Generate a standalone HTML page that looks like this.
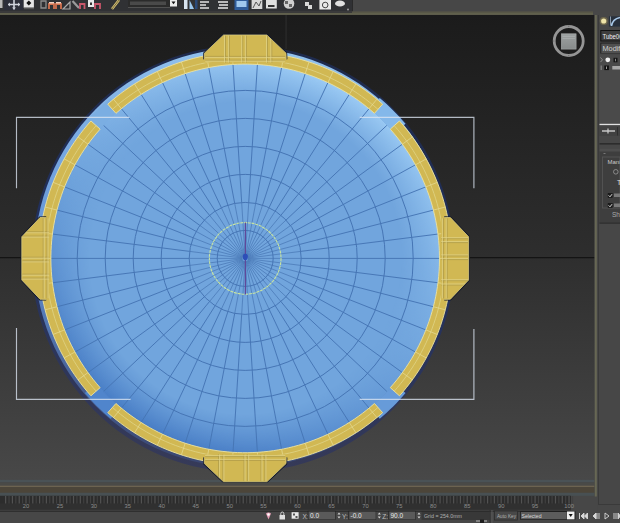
<!DOCTYPE html>
<html><head><meta charset="utf-8">
<style>
html,body{margin:0;padding:0;}
body{width:620px;height:523px;overflow:hidden;background:#474747;position:relative;font-family:"Liberation Sans",sans-serif;}
svg{position:absolute;left:0;top:0;}
</style></head>
<body>
<svg width="620" height="523" viewBox="0 0 620 523">
<defs>
  <linearGradient id="vpg" x1="0" y1="0" x2="0" y2="1">
    <stop offset="0" stop-color="#1b1b1b"/>
    <stop offset="0.5" stop-color="#2d2d2d"/>
    <stop offset="1" stop-color="#484848"/>
  </linearGradient>
  <linearGradient id="rimg" x1="0.45" y1="1" x2="0.55" y2="0">
    <stop offset="0" stop-color="#3a4670"/>
    <stop offset="0.45" stop-color="#5f8fd4"/>
    <stop offset="1" stop-color="#92c2ee"/>
  </linearGradient>
  <linearGradient id="outg" x1="0.45" y1="1" x2="0.55" y2="0">
    <stop offset="0" stop-color="#363a58"/>
    <stop offset="0.5" stop-color="#22305c"/>
    <stop offset="1" stop-color="#1e2a4c"/>
  </linearGradient>
  <linearGradient id="shadeg" x1="0.25" y1="0.95" x2="0.75" y2="0.05">
    <stop offset="0" stop-color="#467bc4"/>
    <stop offset="0.5" stop-color="#71a5dd"/>
    <stop offset="1" stop-color="#9ccbf4"/>
  </linearGradient>
  <radialGradient id="edgeg" cx="0.5" cy="0.5" r="0.5">
    <stop offset="0.8" stop-color="#000"/>
    <stop offset="1" stop-color="#fff"/>
  </radialGradient>
  <mask id="edgem"><circle cx="245.2" cy="258.4" r="194.8" fill="url(#edgeg)"/></mask>
  <linearGradient id="vcg" x1="0" y1="0" x2="0" y2="1">
    <stop offset="0" stop-color="#9ea2a2"/>
    <stop offset="1" stop-color="#878b8b"/>
  </linearGradient>
</defs>
<!-- toolbar -->
<rect x="0" y="0" width="620" height="15" fill="#474747"/>
<rect x="0" y="0" width="352.3" height="11.5" fill="#303134"/>
<rect x="352" y="0" width="1" height="11.5" fill="#2a2a2a"/>
<g>
  <rect x="0" y="0" width="2.5" height="8" fill="#b8b8b8"/>
  <rect x="4" y="0" width="19" height="10" fill="#2c2e3a"/>
  <path d="M8 4.5H20M14 0V9.5" stroke="#cfd2dc" stroke-width="1.6"/>
  <path d="M8 4.5l2-2v4zM20 4.5l-2-2v4zM14 9.5l-2-2h4z" fill="#cfd2dc"/>
  <rect x="23.7" y="0" width="10.2" height="7.7" fill="#e6e6e6"/>
  <path d="M28.8 0.5l2.5 2.5-2.5 2.5-2.5-2.5z" fill="#111"/>
  <rect x="24" y="7.7" width="10" height="1.5" fill="#555"/>
  <path d="M41 1h5v7h-5z" fill="none" stroke="#8c8c8c" stroke-width="1.3"/>
  <path d="M49 9V4h5v5M56 9V4h5v5" fill="none" stroke="#d2714e" stroke-width="1.8"/>
  <rect x="49" y="2" width="5" height="1.5" fill="#f0d0c0"/><rect x="56" y="2" width="5" height="1.5" fill="#f0d0c0"/>
  <path d="M63 9L70 2V9z" fill="none" stroke="#a8a8a8" stroke-width="1.2"/>
  <path d="M72.5 1L79 8" stroke="#9a9a9a" stroke-width="2.2"/>
  <path d="M80 9V4h4.5v5M95 9V4h5v5" fill="none" stroke="#c9566a" stroke-width="1.8"/>
  <rect x="88" y="0" width="6" height="7" fill="#e8e8e8"/><rect x="90" y="2.5" width="2" height="2.5" fill="#333"/>
  <path d="M112 9L119 0" stroke="#d8c070" stroke-width="2.5"/>
  <path d="M112 9L119 0" stroke="#4a4a30" stroke-width="0.7"/>
  <rect x="128" y="0" width="42" height="7.5" fill="#2b2b2b"/>
  <rect x="128" y="7.2" width="42" height="0.8" fill="#5a5a5a"/>
  <rect x="130" y="1.5" width="36" height="3.5" fill="#4a4a4a"/>
  <rect x="170" y="0" width="7" height="6.5" fill="#ececec"/>
  <path d="M171.5 1.5h4l-2 2.8z" fill="#111"/>
  <rect x="184" y="0" width="3.5" height="9" fill="#d8e4f0"/>
  <path d="M189.5 9V0l4.5 9z" fill="#9cc8ee"/>
  <rect x="195" y="0" width="2.5" height="9" fill="#2a4a7a"/>
  <path d="M200 2h9M200 5h6M200 8h9" stroke="#e0e0e0" stroke-width="1.6"/>
  <path d="M218 2h10M219 5h9M218 8h10" stroke="#e8e8e8" stroke-width="1.6"/>
  <rect x="234.5" y="0" width="14" height="10" fill="#2f5c9a"/>
  <rect x="236.5" y="1" width="10" height="6" fill="#9fc8ee"/>
  <rect x="251.6" y="0" width="10.7" height="9" fill="#d8d8d8"/>
  <path d="M253 8L256 2L259 6L261 1" stroke="#555" stroke-width="1" fill="none"/>
  <rect x="266" y="0" width="10.8" height="8.5" fill="#e0e0e0"/>
  <rect x="268" y="5" width="6.5" height="2" fill="#333"/>
  <circle cx="289" cy="3.5" r="5.3" fill="#cfcfcf"/>
  <path d="M285 1h3v3h-3zM289 4h3v3h-3z" fill="#666"/>
  <path d="M305 2h4v3h3v4h-4v-3h-3z" fill="#d8d8d8"/>
  <rect x="319.4" y="0" width="11.6" height="9.5" fill="#e8e8e8"/>
  <circle cx="325.2" cy="5" r="2.8" fill="none" stroke="#444" stroke-width="1"/>
  <ellipse cx="340" cy="3.5" rx="5" ry="3" fill="#e0e0e0"/>
  <circle cx="348" cy="9.5" r="0.9" fill="#aaa"/>
</g>
<rect x="352" y="11.5" width="241" height="1.3" fill="#5c5b48"/>
<rect x="0" y="11.5" width="352" height="1.5" fill="#3a3a3a"/>
<rect x="0" y="13.2" width="593" height="1.5" fill="#67664e"/>
<!-- viewport -->
<rect x="0" y="15" width="594.5" height="464.6" fill="url(#vpg)"/>
<rect x="285.5" y="15" width="1.2" height="34" fill="#2c2c2c"/>
<!-- world axis -->
<rect x="0" y="257.2" width="594.5" height="1" fill="#0e0e0e"/>
<!-- bottom bands -->
<rect x="0" y="479.8" width="594.5" height="2.6" fill="#4a5256"/>
<rect x="0" y="482.6" width="594.5" height="2.8" fill="#4a4a47"/>
<rect x="0" y="485.6" width="594.5" height="1.4" fill="#6c6350"/>
<rect x="0" y="487.2" width="594.5" height="5.6" fill="#4c4539"/>
<rect x="0" y="492.8" width="594.5" height="3" fill="#485053"/>
<clipPath id="vpclip"><rect x="0" y="15" width="594.5" height="467.6"/></clipPath>
<g clip-path="url(#vpclip)">
<ellipse cx="243.00" cy="258.80" rx="211.4" ry="213.4" fill="url(#outg)"/>
<ellipse cx="242.70" cy="257.60" rx="208.3" ry="209.6" fill="url(#rimg)"/>
<circle cx="245.20" cy="258.40" r="194.8" fill="#71a5dd"/>
<circle cx="245.20" cy="258.40" r="194.8" fill="url(#shadeg)" mask="url(#edgem)"/>
<path d="M301.20 258.40L439.50 258.40M300.76 265.42L437.97 282.75M299.44 272.33L433.40 306.72M297.27 279.01L425.86 329.93M294.27 285.38L415.47 352.00M290.50 291.32L402.39 372.61M286.02 296.73L386.84 391.41M280.90 301.55L369.05 408.11M275.21 305.68L349.31 422.45M269.04 309.07L327.93 434.21M262.50 311.66L305.24 443.19M255.69 313.41L281.61 449.26M248.72 314.29L257.40 452.32M241.68 314.29L233.00 452.32M234.71 313.41L208.79 449.26M227.90 311.66L185.16 443.19M221.36 309.07L162.47 434.21M215.19 305.68L141.09 422.45M209.50 301.55L121.35 408.11M204.38 296.73L103.56 391.41M199.90 291.32L88.01 372.61M196.13 285.38L74.93 352.00M193.13 279.01L64.54 329.93M190.96 272.33L57.00 306.72M189.64 265.42L52.43 282.75M189.20 258.40L50.90 258.40M189.64 251.38L52.43 234.05M190.96 244.47L57.00 210.08M193.13 237.79L64.54 186.87M196.13 231.42L74.93 164.80M199.90 225.48L88.01 144.19M204.38 220.07L103.56 125.39M209.50 215.25L121.35 108.69M215.19 211.12L141.09 94.35M221.36 207.73L162.47 82.59M227.90 205.14L185.16 73.61M234.71 203.39L208.79 67.54M241.68 202.51L233.00 64.48M248.72 202.51L257.40 64.48M255.69 203.39L281.61 67.54M262.50 205.14L305.24 73.61M269.04 207.73L327.93 82.59M275.21 211.12L349.31 94.35M280.90 215.25L369.05 108.69M286.02 220.07L386.84 125.39M290.50 225.48L402.39 144.19M294.27 231.42L415.47 164.80M297.27 237.79L425.86 186.87M299.44 244.47L433.40 210.08M300.76 251.38L437.97 234.05" stroke="#4675b4" stroke-width="0.95" fill="none"/>
<path d="M248.20 258.40L301.20 258.40M248.18 258.78L300.76 265.42M248.11 259.15L299.44 272.33M247.99 259.50L297.27 279.01M247.83 259.85L294.27 285.38M247.63 260.16L290.50 291.32M247.39 260.45L286.02 296.73M247.11 260.71L280.90 301.55M246.81 260.93L275.21 305.68M246.48 261.11L269.04 309.07M246.13 261.25L262.50 311.66M245.76 261.35L255.69 313.41M245.39 261.39L248.72 314.29M245.01 261.39L241.68 314.29M244.64 261.35L234.71 313.41M244.27 261.25L227.90 311.66M243.92 261.11L221.36 309.07M243.59 260.93L215.19 305.68M243.29 260.71L209.50 301.55M243.01 260.45L204.38 296.73M242.77 260.16L199.90 291.32M242.57 259.85L196.13 285.38M242.41 259.50L193.13 279.01M242.29 259.15L190.96 272.33M242.22 258.78L189.64 265.42M242.20 258.40L189.20 258.40M242.22 258.02L189.64 251.38M242.29 257.65L190.96 244.47M242.41 257.30L193.13 237.79M242.57 256.95L196.13 231.42M242.77 256.64L199.90 225.48M243.01 256.35L204.38 220.07M243.29 256.09L209.50 215.25M243.59 255.87L215.19 211.12M243.92 255.69L221.36 207.73M244.27 255.55L227.90 205.14M244.64 255.45L234.71 203.39M245.01 255.41L241.68 202.51M245.39 255.41L248.72 202.51M245.76 255.45L255.69 203.39M246.13 255.55L262.50 205.14M246.48 255.69L269.04 207.73M246.81 255.87L275.21 211.12M247.11 256.09L280.90 215.25M247.39 256.35L286.02 220.07M247.63 256.64L290.50 225.48M247.83 256.95L294.27 231.42M247.99 257.30L297.27 237.79M248.11 257.65L299.44 244.47M248.18 258.02L300.76 251.38" stroke="#4a78b6" stroke-width="0.75" fill="none"/>
<circle cx="245.20" cy="258.40" r="28.0" stroke="#4675b4" stroke-width="1.0" fill="none"/>
<circle cx="245.20" cy="258.40" r="56.0" stroke="#4675b4" stroke-width="1.0" fill="none"/>
<circle cx="245.20" cy="258.40" r="84.0" stroke="#4675b4" stroke-width="1.0" fill="none"/>
<circle cx="245.20" cy="258.40" r="112.0" stroke="#4675b4" stroke-width="1.0" fill="none"/>
<circle cx="245.20" cy="258.40" r="140.0" stroke="#4675b4" stroke-width="1.0" fill="none"/>
<circle cx="245.20" cy="258.40" r="168.0" stroke="#4675b4" stroke-width="1.0" fill="none"/>
<path d="M405.53 392.94 L402.56 396.40 L399.51 399.80 L396.39 403.13 L393.20 406.40 L389.93 409.59 L386.60 412.71 L383.20 415.76 L379.74 418.73 L370.29 407.47 L373.51 404.71 L376.67 401.87 L379.77 398.97 L382.80 396.00 L385.77 392.97 L388.67 389.87 L391.51 386.71 L394.27 383.49 Z" fill="#679bd9"/>
<path d="M110.66 418.73 L107.20 415.76 L103.80 412.71 L100.47 409.59 L97.20 406.40 L94.01 403.13 L90.89 399.80 L87.84 396.40 L84.87 392.94 L96.13 383.49 L98.89 386.71 L101.73 389.87 L104.63 392.97 L107.60 396.00 L110.63 398.97 L113.73 401.87 L116.89 404.71 L120.11 407.47 Z" fill="#5085cc"/>
<path d="M84.87 123.86 L87.84 120.40 L90.89 117.00 L94.01 113.67 L97.20 110.40 L100.47 107.21 L103.80 104.09 L107.20 101.04 L110.66 98.07 L120.11 109.33 L116.89 112.09 L113.73 114.93 L110.63 117.83 L107.60 120.80 L104.63 123.83 L101.73 126.93 L98.89 130.09 L96.13 133.31 Z" fill="#7baee2"/>
<path d="M379.74 98.07 L383.20 101.04 L386.60 104.09 L389.93 107.21 L393.20 110.40 L396.39 113.67 L399.51 117.00 L402.56 120.40 L405.53 123.86 L394.27 133.31 L391.51 130.09 L388.67 126.93 L385.77 123.83 L382.80 120.80 L379.77 117.83 L376.67 114.93 L373.51 112.09 L370.29 109.33 Z" fill="#84b8ea"/>
<path d="M107.76 104.14 L111.89 100.56 L116.12 97.09 L120.43 93.73 L124.83 90.49 L129.32 87.36 L133.88 84.35 L138.53 81.47 L143.25 78.71 L148.04 76.07 L152.90 73.57 L157.82 71.19 L162.81 68.94 L167.85 66.83 L172.95 64.85 L178.09 63.00 L183.29 61.30 L188.52 59.73 L193.80 58.30 L199.11 57.01 L204.46 55.86 L209.83 54.85 L215.23 53.98 L220.65 53.26 L226.09 52.69 L231.54 52.25 L237.00 51.96 L242.47 51.82 L247.93 51.82 L253.40 51.96 L258.86 52.25 L264.31 52.69 L269.75 53.26 L275.17 53.98 L280.57 54.85 L285.94 55.86 L291.29 57.01 L296.60 58.30 L301.88 59.73 L307.11 61.30 L312.31 63.00 L317.45 64.85 L322.55 66.83 L327.59 68.94 L332.58 71.19 L337.50 73.57 L342.36 76.07 L347.15 78.71 L351.87 81.47 L356.52 84.35 L361.08 87.36 L365.57 90.49 L369.97 93.73 L374.28 97.09 L378.51 100.56 L382.64 104.14 L374.45 113.33 L370.57 109.96 L366.60 106.69 L362.54 103.53 L358.40 100.48 L354.18 97.54 L349.89 94.71 L345.52 92.00 L341.08 89.41 L336.58 86.93 L332.01 84.57 L327.38 82.33 L322.69 80.22 L317.95 78.23 L313.15 76.37 L308.31 74.64 L303.43 73.03 L298.50 71.55 L293.54 70.21 L288.54 69.00 L283.51 67.92 L278.46 66.97 L273.38 66.15 L268.29 65.48 L263.17 64.93 L258.05 64.53 L252.91 64.25 L247.77 64.12 L242.63 64.12 L237.49 64.25 L232.35 64.53 L227.23 64.93 L222.11 65.48 L217.02 66.15 L211.94 66.97 L206.89 67.92 L201.86 69.00 L196.86 70.21 L191.90 71.55 L186.97 73.03 L182.09 74.64 L177.25 76.37 L172.45 78.23 L167.71 80.22 L163.02 82.33 L158.39 84.57 L153.82 86.93 L149.32 89.41 L144.88 92.00 L140.51 94.71 L136.22 97.54 L132.00 100.48 L127.86 103.53 L123.80 106.69 L119.83 109.96 L115.95 113.33 Z" fill="#d1b853" stroke="#ece2a0" stroke-width="0.9"/>
<path d="M112.42 109.37 L116.41 105.91 L120.49 102.55 L124.66 99.31 L128.91 96.18 L133.24 93.15 L137.66 90.25 L142.14 87.46 L146.70 84.80 L151.33 82.25 L156.03 79.83 L160.78 77.53 L165.60 75.36 L170.47 73.32 L175.39 71.40 L180.37 69.62 L185.38 67.97 L190.44 66.46 L195.54 65.08 L200.68 63.83 L205.84 62.72 L211.03 61.75 L216.25 60.91 L221.48 60.21 L226.74 59.66 L232.00 59.24 L237.28 58.96 L242.56 58.82 L247.84 58.82 L253.12 58.96 L258.40 59.24 L263.66 59.66 L268.92 60.21 L274.15 60.91 L279.37 61.75 L284.56 62.72 L289.72 63.83 L294.86 65.08 L299.96 66.46 L305.02 67.97 L310.03 69.62 L315.01 71.40 L319.93 73.32 L324.80 75.36 L329.62 77.53 L334.37 79.83 L339.07 82.25 L343.70 84.80 L348.26 87.46 L352.74 90.25 L357.16 93.15 L361.49 96.18 L365.74 99.31 L369.91 102.55 L373.99 105.91 L377.98 109.37" fill="none" stroke="#e0d488" stroke-width="0.8"/>
<path d="M121.35 108.69L113.51 99.21M141.09 94.35L134.50 83.96M162.47 82.59L157.23 71.46M185.16 73.61L181.36 61.91M208.79 67.54L206.49 55.46M233.00 64.48L232.23 52.21M257.40 64.48L258.17 52.21M281.61 67.54L283.91 55.46M305.24 73.61L309.04 61.91M327.93 82.59L333.17 71.46M349.31 94.35L355.90 83.96M369.05 108.69L376.89 99.21" stroke="#e6dc98" stroke-width="0.7" fill="none"/>
<path d="M399.46 120.96 L403.04 125.09 L406.51 129.32 L409.87 133.63 L413.11 138.03 L416.24 142.52 L419.25 147.08 L422.13 151.73 L424.89 156.45 L427.53 161.24 L430.03 166.10 L432.41 171.02 L434.66 176.01 L436.77 181.05 L438.75 186.15 L440.60 191.29 L442.30 196.49 L443.87 201.72 L445.30 207.00 L446.59 212.31 L447.74 217.66 L448.75 223.03 L449.62 228.43 L450.34 233.85 L450.91 239.29 L451.35 244.74 L451.64 250.20 L451.78 255.67 L451.78 261.13 L451.64 266.60 L451.35 272.06 L450.91 277.51 L450.34 282.95 L449.62 288.37 L448.75 293.77 L447.74 299.14 L446.59 304.49 L445.30 309.80 L443.87 315.08 L442.30 320.31 L440.60 325.51 L438.75 330.65 L436.77 335.75 L434.66 340.79 L432.41 345.78 L430.03 350.70 L427.53 355.56 L424.89 360.35 L422.13 365.07 L419.25 369.72 L416.24 374.28 L413.11 378.77 L409.87 383.17 L406.51 387.48 L403.04 391.71 L399.46 395.84 L390.27 387.65 L393.64 383.77 L396.91 379.80 L400.07 375.74 L403.12 371.60 L406.06 367.38 L408.89 363.09 L411.60 358.72 L414.19 354.28 L416.67 349.78 L419.03 345.21 L421.27 340.58 L423.38 335.89 L425.37 331.15 L427.23 326.35 L428.96 321.51 L430.57 316.63 L432.05 311.70 L433.39 306.74 L434.60 301.74 L435.68 296.71 L436.63 291.66 L437.45 286.58 L438.12 281.49 L438.67 276.37 L439.07 271.25 L439.35 266.11 L439.48 260.97 L439.48 255.83 L439.35 250.69 L439.07 245.55 L438.67 240.43 L438.12 235.31 L437.45 230.22 L436.63 225.14 L435.68 220.09 L434.60 215.06 L433.39 210.06 L432.05 205.10 L430.57 200.17 L428.96 195.29 L427.23 190.45 L425.37 185.65 L423.38 180.91 L421.27 176.22 L419.03 171.59 L416.67 167.02 L414.19 162.52 L411.60 158.08 L408.89 153.71 L406.06 149.42 L403.12 145.20 L400.07 141.06 L396.91 137.00 L393.64 133.03 L390.27 129.15 Z" fill="#d1b853" stroke="#ece2a0" stroke-width="0.9"/>
<path d="M394.23 125.62 L397.69 129.61 L401.05 133.69 L404.29 137.86 L407.42 142.11 L410.45 146.44 L413.35 150.86 L416.14 155.34 L418.80 159.90 L421.35 164.53 L423.77 169.23 L426.07 173.98 L428.24 178.80 L430.28 183.67 L432.20 188.59 L433.98 193.57 L435.63 198.58 L437.14 203.64 L438.52 208.74 L439.77 213.88 L440.88 219.04 L441.85 224.23 L442.69 229.45 L443.39 234.68 L443.94 239.94 L444.36 245.20 L444.64 250.48 L444.78 255.76 L444.78 261.04 L444.64 266.32 L444.36 271.60 L443.94 276.86 L443.39 282.12 L442.69 287.35 L441.85 292.57 L440.88 297.76 L439.77 302.92 L438.52 308.06 L437.14 313.16 L435.63 318.22 L433.98 323.23 L432.20 328.21 L430.28 333.13 L428.24 338.00 L426.07 342.82 L423.77 347.57 L421.35 352.27 L418.80 356.90 L416.14 361.46 L413.35 365.94 L410.45 370.36 L407.42 374.69 L404.29 378.94 L401.05 383.11 L397.69 387.19 L394.23 391.18" fill="none" stroke="#e0d488" stroke-width="0.8"/>
<path d="M402.39 144.19L412.34 136.96M415.47 164.80L426.24 158.87M425.86 186.87L437.29 182.35M433.40 210.08L445.31 207.02M437.97 234.05L450.17 232.51M439.50 258.40L451.80 258.40M437.97 282.75L450.17 284.29M433.40 306.72L445.31 309.78M425.86 329.93L437.29 334.45M415.47 352.00L426.24 357.93M402.39 372.61L412.34 379.84" stroke="#e6dc98" stroke-width="0.7" fill="none"/>
<path d="M382.64 412.66 L378.51 416.24 L374.28 419.71 L369.97 423.07 L365.57 426.31 L361.08 429.44 L356.52 432.45 L351.87 435.33 L347.15 438.09 L342.36 440.73 L337.50 443.23 L332.58 445.61 L327.59 447.86 L322.55 449.97 L317.45 451.95 L312.31 453.80 L307.11 455.50 L301.88 457.07 L296.60 458.50 L291.29 459.79 L285.94 460.94 L280.57 461.95 L275.17 462.82 L269.75 463.54 L264.31 464.11 L258.86 464.55 L253.40 464.84 L247.93 464.98 L242.47 464.98 L237.00 464.84 L231.54 464.55 L226.09 464.11 L220.65 463.54 L215.23 462.82 L209.83 461.95 L204.46 460.94 L199.11 459.79 L193.80 458.50 L188.52 457.07 L183.29 455.50 L178.09 453.80 L172.95 451.95 L167.85 449.97 L162.81 447.86 L157.82 445.61 L152.90 443.23 L148.04 440.73 L143.25 438.09 L138.53 435.33 L133.88 432.45 L129.32 429.44 L124.83 426.31 L120.43 423.07 L116.12 419.71 L111.89 416.24 L107.76 412.66 L115.95 403.47 L119.83 406.84 L123.80 410.11 L127.86 413.27 L132.00 416.32 L136.22 419.26 L140.51 422.09 L144.88 424.80 L149.32 427.39 L153.82 429.87 L158.39 432.23 L163.02 434.47 L167.71 436.58 L172.45 438.57 L177.25 440.43 L182.09 442.16 L186.97 443.77 L191.90 445.25 L196.86 446.59 L201.86 447.80 L206.89 448.88 L211.94 449.83 L217.02 450.65 L222.11 451.32 L227.23 451.87 L232.35 452.27 L237.49 452.55 L242.63 452.68 L247.77 452.68 L252.91 452.55 L258.05 452.27 L263.17 451.87 L268.29 451.32 L273.38 450.65 L278.46 449.83 L283.51 448.88 L288.54 447.80 L293.54 446.59 L298.50 445.25 L303.43 443.77 L308.31 442.16 L313.15 440.43 L317.95 438.57 L322.69 436.58 L327.38 434.47 L332.01 432.23 L336.58 429.87 L341.08 427.39 L345.52 424.80 L349.89 422.09 L354.18 419.26 L358.40 416.32 L362.54 413.27 L366.60 410.11 L370.57 406.84 L374.45 403.47 Z" fill="#d1b853" stroke="#ece2a0" stroke-width="0.9"/>
<path d="M377.98 407.43 L373.99 410.89 L369.91 414.25 L365.74 417.49 L361.49 420.62 L357.16 423.65 L352.74 426.55 L348.26 429.34 L343.70 432.00 L339.07 434.55 L334.37 436.97 L329.62 439.27 L324.80 441.44 L319.93 443.48 L315.01 445.40 L310.03 447.18 L305.02 448.83 L299.96 450.34 L294.86 451.72 L289.72 452.97 L284.56 454.08 L279.37 455.05 L274.15 455.89 L268.92 456.59 L263.66 457.14 L258.40 457.56 L253.12 457.84 L247.84 457.98 L242.56 457.98 L237.28 457.84 L232.00 457.56 L226.74 457.14 L221.48 456.59 L216.25 455.89 L211.03 455.05 L205.84 454.08 L200.68 452.97 L195.54 451.72 L190.44 450.34 L185.38 448.83 L180.37 447.18 L175.39 445.40 L170.47 443.48 L165.60 441.44 L160.78 439.27 L156.03 436.97 L151.33 434.55 L146.70 432.00 L142.14 429.34 L137.66 426.55 L133.24 423.65 L128.91 420.62 L124.66 417.49 L120.49 414.25 L116.41 410.89 L112.42 407.43" fill="none" stroke="#e0d488" stroke-width="0.8"/>
<path d="M369.05 408.11L376.89 417.59M349.31 422.45L355.90 432.84M327.93 434.21L333.17 445.34M305.24 443.19L309.04 454.89M281.61 449.26L283.91 461.34M257.40 452.32L258.17 464.59M233.00 452.32L232.23 464.59M208.79 449.26L206.49 461.34M185.16 443.19L181.36 454.89M162.47 434.21L157.23 445.34M141.09 422.45L134.50 432.84M121.35 408.11L113.51 417.59" stroke="#e6dc98" stroke-width="0.7" fill="none"/>
<path d="M90.94 395.84 L87.36 391.71 L83.89 387.48 L80.53 383.17 L77.29 378.77 L74.16 374.28 L71.15 369.72 L68.27 365.07 L65.51 360.35 L62.87 355.56 L60.37 350.70 L57.99 345.78 L55.74 340.79 L53.63 335.75 L51.65 330.65 L49.80 325.51 L48.10 320.31 L46.53 315.08 L45.10 309.80 L43.81 304.49 L42.66 299.14 L41.65 293.77 L40.78 288.37 L40.06 282.95 L39.49 277.51 L39.05 272.06 L38.76 266.60 L38.62 261.13 L38.62 255.67 L38.76 250.20 L39.05 244.74 L39.49 239.29 L40.06 233.85 L40.78 228.43 L41.65 223.03 L42.66 217.66 L43.81 212.31 L45.10 207.00 L46.53 201.72 L48.10 196.49 L49.80 191.29 L51.65 186.15 L53.63 181.05 L55.74 176.01 L57.99 171.02 L60.37 166.10 L62.87 161.24 L65.51 156.45 L68.27 151.73 L71.15 147.08 L74.16 142.52 L77.29 138.03 L80.53 133.63 L83.89 129.32 L87.36 125.09 L90.94 120.96 L100.13 129.15 L96.76 133.03 L93.49 137.00 L90.33 141.06 L87.28 145.20 L84.34 149.42 L81.51 153.71 L78.80 158.08 L76.21 162.52 L73.73 167.02 L71.37 171.59 L69.13 176.22 L67.02 180.91 L65.03 185.65 L63.17 190.45 L61.44 195.29 L59.83 200.17 L58.35 205.10 L57.01 210.06 L55.80 215.06 L54.72 220.09 L53.77 225.14 L52.95 230.22 L52.28 235.31 L51.73 240.43 L51.33 245.55 L51.05 250.69 L50.92 255.83 L50.92 260.97 L51.05 266.11 L51.33 271.25 L51.73 276.37 L52.28 281.49 L52.95 286.58 L53.77 291.66 L54.72 296.71 L55.80 301.74 L57.01 306.74 L58.35 311.70 L59.83 316.63 L61.44 321.51 L63.17 326.35 L65.03 331.15 L67.02 335.89 L69.13 340.58 L71.37 345.21 L73.73 349.78 L76.21 354.28 L78.80 358.72 L81.51 363.09 L84.34 367.38 L87.28 371.60 L90.33 375.74 L93.49 379.80 L96.76 383.77 L100.13 387.65 Z" fill="#d1b853" stroke="#ece2a0" stroke-width="0.9"/>
<path d="M96.17 391.18 L92.71 387.19 L89.35 383.11 L86.11 378.94 L82.98 374.69 L79.95 370.36 L77.05 365.94 L74.26 361.46 L71.60 356.90 L69.05 352.27 L66.63 347.57 L64.33 342.82 L62.16 338.00 L60.12 333.13 L58.20 328.21 L56.42 323.23 L54.77 318.22 L53.26 313.16 L51.88 308.06 L50.63 302.92 L49.52 297.76 L48.55 292.57 L47.71 287.35 L47.01 282.12 L46.46 276.86 L46.04 271.60 L45.76 266.32 L45.62 261.04 L45.62 255.76 L45.76 250.48 L46.04 245.20 L46.46 239.94 L47.01 234.68 L47.71 229.45 L48.55 224.23 L49.52 219.04 L50.63 213.88 L51.88 208.74 L53.26 203.64 L54.77 198.58 L56.42 193.57 L58.20 188.59 L60.12 183.67 L62.16 178.80 L64.33 173.98 L66.63 169.23 L69.05 164.53 L71.60 159.90 L74.26 155.34 L77.05 150.86 L79.95 146.44 L82.98 142.11 L86.11 137.86 L89.35 133.69 L92.71 129.61 L96.17 125.62" fill="none" stroke="#e0d488" stroke-width="0.8"/>
<path d="M88.01 372.61L78.06 379.84M74.93 352.00L64.16 357.93M64.54 329.93L53.11 334.45M57.00 306.72L45.09 309.78M52.43 282.75L40.23 284.29M50.90 258.40L38.60 258.40M52.43 234.05L40.23 232.51M57.00 210.08L45.09 207.02M64.54 186.87L53.11 182.35M74.93 164.80L64.16 158.87M88.01 144.19L78.06 136.96" stroke="#e6dc98" stroke-width="0.7" fill="none"/>
<path d="M204.20 59.40 L204.40 53.20 L223.60 35.00 L266.80 35.00 L286.00 53.20 L286.20 59.40" fill="none" stroke="#161b2b" stroke-width="2.4"/>
<path d="M204.20 59.40 L204.40 53.20 L223.60 35.00 L266.80 35.00 L286.00 53.20 L286.20 59.40 L286.20 62.40 L204.20 62.40 Z" fill="#d1b853"/>
<path d="M204.20 59.40 L204.40 53.20 L223.60 35.00 L266.80 35.00 L286.00 53.20 L286.20 59.40" fill="none" stroke="#d9ca7c" stroke-width="0.8"/>
<clipPath id="tc0"><path d="M204.20 59.40 L204.40 53.20 L223.60 35.00 L266.80 35.00 L286.00 53.20 L286.20 59.40 L286.20 62.40 L204.20 62.40 Z"/></clipPath>
<g clip-path="url(#tc0)">
<path d="M225.50 35.60L225.50 63.10M229.40 35.60L229.40 63.10M242.70 35.60L242.70 63.10M246.40 35.60L246.40 63.10M267.50 35.60L267.50 63.10M271.80 35.60L271.80 63.10M205.20 56.40L285.20 56.40M205.20 60.20L285.20 60.20" stroke="#a99747" stroke-width="0.7" fill="none"/>
<path d="M224.50 35.60L224.50 63.10M228.40 35.60L228.40 63.10M241.70 35.60L241.70 63.10M245.40 35.60L245.40 63.10M266.50 35.60L266.50 63.10M270.80 35.60L270.80 63.10M205.20 57.40L285.20 57.40M205.20 61.20L285.20 61.20" stroke="#e2d68e" stroke-width="0.7" fill="none"/>
</g>
<path d="M444.20 217.40 L450.40 217.60 L468.60 236.80 L468.60 280.00 L450.40 299.20 L444.20 299.40" fill="none" stroke="#161b2b" stroke-width="2.4"/>
<path d="M444.20 217.40 L450.40 217.60 L468.60 236.80 L468.60 280.00 L450.40 299.20 L444.20 299.40 L441.20 299.40 L441.20 217.40 Z" fill="#d1b853"/>
<path d="M444.20 217.40 L450.40 217.60 L468.60 236.80 L468.60 280.00 L450.40 299.20 L444.20 299.40" fill="none" stroke="#d9ca7c" stroke-width="0.8"/>
<clipPath id="tc90"><path d="M444.20 217.40 L450.40 217.60 L468.60 236.80 L468.60 280.00 L450.40 299.20 L444.20 299.40 L441.20 299.40 L441.20 217.40 Z"/></clipPath>
<g clip-path="url(#tc90)">
<path d="M468.00 238.70L440.50 238.70M468.00 242.60L440.50 242.60M468.00 255.90L440.50 255.90M468.00 259.60L440.50 259.60M468.00 280.70L440.50 280.70M468.00 285.00L440.50 285.00M447.20 218.40L447.20 298.40M443.40 218.40L443.40 298.40" stroke="#a99747" stroke-width="0.7" fill="none"/>
<path d="M468.00 237.70L440.50 237.70M468.00 241.60L440.50 241.60M468.00 254.90L440.50 254.90M468.00 258.60L440.50 258.60M468.00 279.70L440.50 279.70M468.00 284.00L440.50 284.00M446.20 218.40L446.20 298.40M442.40 218.40L442.40 298.40" stroke="#e2d68e" stroke-width="0.7" fill="none"/>
</g>
<path d="M286.20 457.40 L286.00 463.60 L266.80 481.80 L223.60 481.80 L204.40 463.60 L204.20 457.40" fill="none" stroke="#161b2b" stroke-width="2.4"/>
<path d="M286.20 457.40 L286.00 463.60 L266.80 481.80 L223.60 481.80 L204.40 463.60 L204.20 457.40 L204.20 454.40 L286.20 454.40 Z" fill="#d1b853"/>
<path d="M286.20 457.40 L286.00 463.60 L266.80 481.80 L223.60 481.80 L204.40 463.60 L204.20 457.40" fill="none" stroke="#d9ca7c" stroke-width="0.8"/>
<clipPath id="tc180"><path d="M286.20 457.40 L286.00 463.60 L266.80 481.80 L223.60 481.80 L204.40 463.60 L204.20 457.40 L204.20 454.40 L286.20 454.40 Z"/></clipPath>
<g clip-path="url(#tc180)">
<path d="M264.90 481.20L264.90 453.70M261.00 481.20L261.00 453.70M247.70 481.20L247.70 453.70M244.00 481.20L244.00 453.70M222.90 481.20L222.90 453.70M218.60 481.20L218.60 453.70M285.20 460.40L205.20 460.40M285.20 456.60L205.20 456.60" stroke="#a99747" stroke-width="0.7" fill="none"/>
<path d="M265.90 481.20L265.90 453.70M262.00 481.20L262.00 453.70M248.70 481.20L248.70 453.70M245.00 481.20L245.00 453.70M223.90 481.20L223.90 453.70M219.60 481.20L219.60 453.70M285.20 459.40L205.20 459.40M285.20 455.60L205.20 455.60" stroke="#e2d68e" stroke-width="0.7" fill="none"/>
</g>
<path d="M46.20 299.40 L40.00 299.20 L21.80 280.00 L21.80 236.80 L40.00 217.60 L46.20 217.40" fill="none" stroke="#161b2b" stroke-width="2.4"/>
<path d="M46.20 299.40 L40.00 299.20 L21.80 280.00 L21.80 236.80 L40.00 217.60 L46.20 217.40 L49.20 217.40 L49.20 299.40 Z" fill="#d1b853"/>
<path d="M46.20 299.40 L40.00 299.20 L21.80 280.00 L21.80 236.80 L40.00 217.60 L46.20 217.40" fill="none" stroke="#d9ca7c" stroke-width="0.8"/>
<clipPath id="tc270"><path d="M46.20 299.40 L40.00 299.20 L21.80 280.00 L21.80 236.80 L40.00 217.60 L46.20 217.40 L49.20 217.40 L49.20 299.40 Z"/></clipPath>
<g clip-path="url(#tc270)">
<path d="M22.40 278.10L49.90 278.10M22.40 274.20L49.90 274.20M22.40 260.90L49.90 260.90M22.40 257.20L49.90 257.20M22.40 236.10L49.90 236.10M22.40 231.80L49.90 231.80M43.20 298.40L43.20 218.40M47.00 298.40L47.00 218.40" stroke="#a99747" stroke-width="0.7" fill="none"/>
<path d="M22.40 279.10L49.90 279.10M22.40 275.20L49.90 275.20M22.40 261.90L49.90 261.90M22.40 258.20L49.90 258.20M22.40 237.10L49.90 237.10M22.40 232.80L49.90 232.80M44.20 298.40L44.20 218.40M48.00 298.40L48.00 218.40" stroke="#e2d68e" stroke-width="0.7" fill="none"/>
</g>
</g>
<!-- safe frame -->
<path d="M16.5 188.3V117.4H129.4 M359.7 117.4H473.9V188.3 M16.5 328V399.4H130.6 M359.7 399.4H473.9V329" stroke="#dce6f2" stroke-opacity="0.78" stroke-width="1.15" fill="none"/>
<!-- pivot gizmo -->
<circle cx="245.2" cy="258.4" r="35.8" fill="none" stroke="#c8e4a0" stroke-width="1.1" stroke-dasharray="3 0.8"/>
<line x1="245.4" y1="222.5" x2="245.4" y2="294.5" stroke="#60489a" stroke-width="1.2"/>
<ellipse cx="245.3" cy="256.8" rx="2.6" ry="3.4" fill="#2d4fb8"/>
<!-- viewcube -->
<circle cx="568.7" cy="41" r="14.5" fill="none" stroke="#959595" stroke-width="2.8"/>
<path d="M553 41h1.5M568.7 25.5v1.5M568.7 55v1.5" stroke="#777" stroke-width="1.2"/>
<rect x="561.3" y="33.8" width="14.8" height="15.3" fill="url(#vcg)" stroke="#a5a8a8" stroke-width="0.6"/>
<path d="M562.5 36.5h12.5M562.5 38.5h12.5" stroke="#b4b8b8" stroke-width="0.5"/>
<!-- ruler -->
<rect x="0" y="495.8" width="571" height="15.2" fill="#2c2c2c"/>
<rect x="0" y="503.5" width="571" height="6" fill="#303030"/>
<rect x="0" y="509.6" width="571" height="1.4" fill="#3c3c3c"/>
<rect x="5.04" y="496" width="1.2" height="7.5" fill="#525252"/>
<rect x="8.44" y="496" width="1.2" height="7.5" fill="#404040"/>
<rect x="11.82" y="496" width="1.2" height="7.5" fill="#525252"/>
<rect x="15.22" y="496" width="1.2" height="7.5" fill="#404040"/>
<rect x="18.61" y="496" width="1.2" height="7.5" fill="#525252"/>
<rect x="22.01" y="496" width="1.2" height="7.5" fill="#404040"/>
<rect x="25.40" y="496" width="1.2" height="7.5" fill="#525252"/>
<rect x="28.80" y="496" width="1.2" height="7.5" fill="#404040"/>
<rect x="32.19" y="496" width="1.2" height="7.5" fill="#525252"/>
<rect x="35.59" y="496" width="1.2" height="7.5" fill="#404040"/>
<rect x="38.98" y="496" width="1.2" height="7.5" fill="#525252"/>
<rect x="42.38" y="496" width="1.2" height="7.5" fill="#404040"/>
<rect x="45.76" y="496" width="1.2" height="7.5" fill="#525252"/>
<rect x="49.16" y="496" width="1.2" height="7.5" fill="#404040"/>
<rect x="52.55" y="496" width="1.2" height="7.5" fill="#525252"/>
<rect x="55.95" y="496" width="1.2" height="7.5" fill="#404040"/>
<rect x="59.34" y="496" width="1.2" height="7.5" fill="#525252"/>
<rect x="62.74" y="496" width="1.2" height="7.5" fill="#404040"/>
<rect x="66.13" y="496" width="1.2" height="7.5" fill="#525252"/>
<rect x="69.53" y="496" width="1.2" height="7.5" fill="#404040"/>
<rect x="72.92" y="496" width="1.2" height="7.5" fill="#525252"/>
<rect x="76.32" y="496" width="1.2" height="7.5" fill="#404040"/>
<rect x="79.70" y="496" width="1.2" height="7.5" fill="#525252"/>
<rect x="83.10" y="496" width="1.2" height="7.5" fill="#404040"/>
<rect x="86.49" y="496" width="1.2" height="7.5" fill="#525252"/>
<rect x="89.89" y="496" width="1.2" height="7.5" fill="#404040"/>
<rect x="93.28" y="496" width="1.2" height="7.5" fill="#525252"/>
<rect x="96.68" y="496" width="1.2" height="7.5" fill="#404040"/>
<rect x="100.07" y="496" width="1.2" height="7.5" fill="#525252"/>
<rect x="103.47" y="496" width="1.2" height="7.5" fill="#404040"/>
<rect x="106.86" y="496" width="1.2" height="7.5" fill="#525252"/>
<rect x="110.26" y="496" width="1.2" height="7.5" fill="#404040"/>
<rect x="113.64" y="496" width="1.2" height="7.5" fill="#525252"/>
<rect x="117.04" y="496" width="1.2" height="7.5" fill="#404040"/>
<rect x="120.43" y="496" width="1.2" height="7.5" fill="#525252"/>
<rect x="123.83" y="496" width="1.2" height="7.5" fill="#404040"/>
<rect x="127.22" y="496" width="1.2" height="7.5" fill="#525252"/>
<rect x="130.62" y="496" width="1.2" height="7.5" fill="#404040"/>
<rect x="134.01" y="496" width="1.2" height="7.5" fill="#525252"/>
<rect x="137.41" y="496" width="1.2" height="7.5" fill="#404040"/>
<rect x="140.80" y="496" width="1.2" height="7.5" fill="#525252"/>
<rect x="144.20" y="496" width="1.2" height="7.5" fill="#404040"/>
<rect x="147.58" y="496" width="1.2" height="7.5" fill="#525252"/>
<rect x="150.98" y="496" width="1.2" height="7.5" fill="#404040"/>
<rect x="154.37" y="496" width="1.2" height="7.5" fill="#525252"/>
<rect x="157.77" y="496" width="1.2" height="7.5" fill="#404040"/>
<rect x="161.16" y="496" width="1.2" height="7.5" fill="#525252"/>
<rect x="164.56" y="496" width="1.2" height="7.5" fill="#404040"/>
<rect x="167.95" y="496" width="1.2" height="7.5" fill="#525252"/>
<rect x="171.35" y="496" width="1.2" height="7.5" fill="#404040"/>
<rect x="174.74" y="496" width="1.2" height="7.5" fill="#525252"/>
<rect x="178.14" y="496" width="1.2" height="7.5" fill="#404040"/>
<rect x="181.52" y="496" width="1.2" height="7.5" fill="#525252"/>
<rect x="184.92" y="496" width="1.2" height="7.5" fill="#404040"/>
<rect x="188.31" y="496" width="1.2" height="7.5" fill="#525252"/>
<rect x="191.71" y="496" width="1.2" height="7.5" fill="#404040"/>
<rect x="195.10" y="496" width="1.2" height="7.5" fill="#525252"/>
<rect x="198.50" y="496" width="1.2" height="7.5" fill="#404040"/>
<rect x="201.89" y="496" width="1.2" height="7.5" fill="#525252"/>
<rect x="205.29" y="496" width="1.2" height="7.5" fill="#404040"/>
<rect x="208.68" y="496" width="1.2" height="7.5" fill="#525252"/>
<rect x="212.08" y="496" width="1.2" height="7.5" fill="#404040"/>
<rect x="215.46" y="496" width="1.2" height="7.5" fill="#525252"/>
<rect x="218.86" y="496" width="1.2" height="7.5" fill="#404040"/>
<rect x="222.25" y="496" width="1.2" height="7.5" fill="#525252"/>
<rect x="225.65" y="496" width="1.2" height="7.5" fill="#404040"/>
<rect x="229.04" y="496" width="1.2" height="7.5" fill="#525252"/>
<rect x="232.44" y="496" width="1.2" height="7.5" fill="#404040"/>
<rect x="235.83" y="496" width="1.2" height="7.5" fill="#525252"/>
<rect x="239.23" y="496" width="1.2" height="7.5" fill="#404040"/>
<rect x="242.62" y="496" width="1.2" height="7.5" fill="#525252"/>
<rect x="246.02" y="496" width="1.2" height="7.5" fill="#404040"/>
<rect x="249.40" y="496" width="1.2" height="7.5" fill="#525252"/>
<rect x="252.80" y="496" width="1.2" height="7.5" fill="#404040"/>
<rect x="256.19" y="496" width="1.2" height="7.5" fill="#525252"/>
<rect x="259.59" y="496" width="1.2" height="7.5" fill="#404040"/>
<rect x="262.98" y="496" width="1.2" height="7.5" fill="#525252"/>
<rect x="266.38" y="496" width="1.2" height="7.5" fill="#404040"/>
<rect x="269.77" y="496" width="1.2" height="7.5" fill="#525252"/>
<rect x="273.17" y="496" width="1.2" height="7.5" fill="#404040"/>
<rect x="276.56" y="496" width="1.2" height="7.5" fill="#525252"/>
<rect x="279.96" y="496" width="1.2" height="7.5" fill="#404040"/>
<rect x="283.34" y="496" width="1.2" height="7.5" fill="#525252"/>
<rect x="286.74" y="496" width="1.2" height="7.5" fill="#404040"/>
<rect x="290.13" y="496" width="1.2" height="7.5" fill="#525252"/>
<rect x="293.53" y="496" width="1.2" height="7.5" fill="#404040"/>
<rect x="296.92" y="496" width="1.2" height="7.5" fill="#525252"/>
<rect x="300.32" y="496" width="1.2" height="7.5" fill="#404040"/>
<rect x="303.71" y="496" width="1.2" height="7.5" fill="#525252"/>
<rect x="307.11" y="496" width="1.2" height="7.5" fill="#404040"/>
<rect x="310.50" y="496" width="1.2" height="7.5" fill="#525252"/>
<rect x="313.90" y="496" width="1.2" height="7.5" fill="#404040"/>
<rect x="317.28" y="496" width="1.2" height="7.5" fill="#525252"/>
<rect x="320.68" y="496" width="1.2" height="7.5" fill="#404040"/>
<rect x="324.07" y="496" width="1.2" height="7.5" fill="#525252"/>
<rect x="327.47" y="496" width="1.2" height="7.5" fill="#404040"/>
<rect x="330.86" y="496" width="1.2" height="7.5" fill="#525252"/>
<rect x="334.26" y="496" width="1.2" height="7.5" fill="#404040"/>
<rect x="337.65" y="496" width="1.2" height="7.5" fill="#525252"/>
<rect x="341.05" y="496" width="1.2" height="7.5" fill="#404040"/>
<rect x="344.44" y="496" width="1.2" height="7.5" fill="#525252"/>
<rect x="347.84" y="496" width="1.2" height="7.5" fill="#404040"/>
<rect x="351.22" y="496" width="1.2" height="7.5" fill="#525252"/>
<rect x="354.62" y="496" width="1.2" height="7.5" fill="#404040"/>
<rect x="358.01" y="496" width="1.2" height="7.5" fill="#525252"/>
<rect x="361.41" y="496" width="1.2" height="7.5" fill="#404040"/>
<rect x="364.80" y="496" width="1.2" height="7.5" fill="#525252"/>
<rect x="368.20" y="496" width="1.2" height="7.5" fill="#404040"/>
<rect x="371.59" y="496" width="1.2" height="7.5" fill="#525252"/>
<rect x="374.99" y="496" width="1.2" height="7.5" fill="#404040"/>
<rect x="378.38" y="496" width="1.2" height="7.5" fill="#525252"/>
<rect x="381.78" y="496" width="1.2" height="7.5" fill="#404040"/>
<rect x="385.16" y="496" width="1.2" height="7.5" fill="#525252"/>
<rect x="388.56" y="496" width="1.2" height="7.5" fill="#404040"/>
<rect x="391.95" y="496" width="1.2" height="7.5" fill="#525252"/>
<rect x="395.35" y="496" width="1.2" height="7.5" fill="#404040"/>
<rect x="398.74" y="496" width="1.2" height="7.5" fill="#525252"/>
<rect x="402.14" y="496" width="1.2" height="7.5" fill="#404040"/>
<rect x="405.53" y="496" width="1.2" height="7.5" fill="#525252"/>
<rect x="408.93" y="496" width="1.2" height="7.5" fill="#404040"/>
<rect x="412.32" y="496" width="1.2" height="7.5" fill="#525252"/>
<rect x="415.72" y="496" width="1.2" height="7.5" fill="#404040"/>
<rect x="419.10" y="496" width="1.2" height="7.5" fill="#525252"/>
<rect x="422.50" y="496" width="1.2" height="7.5" fill="#404040"/>
<rect x="425.89" y="496" width="1.2" height="7.5" fill="#525252"/>
<rect x="429.29" y="496" width="1.2" height="7.5" fill="#404040"/>
<rect x="432.68" y="496" width="1.2" height="7.5" fill="#525252"/>
<rect x="436.08" y="496" width="1.2" height="7.5" fill="#404040"/>
<rect x="439.47" y="496" width="1.2" height="7.5" fill="#525252"/>
<rect x="442.87" y="496" width="1.2" height="7.5" fill="#404040"/>
<rect x="446.26" y="496" width="1.2" height="7.5" fill="#525252"/>
<rect x="449.66" y="496" width="1.2" height="7.5" fill="#404040"/>
<rect x="453.04" y="496" width="1.2" height="7.5" fill="#525252"/>
<rect x="456.44" y="496" width="1.2" height="7.5" fill="#404040"/>
<rect x="459.83" y="496" width="1.2" height="7.5" fill="#525252"/>
<rect x="463.23" y="496" width="1.2" height="7.5" fill="#404040"/>
<rect x="466.62" y="496" width="1.2" height="7.5" fill="#525252"/>
<rect x="470.02" y="496" width="1.2" height="7.5" fill="#404040"/>
<rect x="473.41" y="496" width="1.2" height="7.5" fill="#525252"/>
<rect x="476.81" y="496" width="1.2" height="7.5" fill="#404040"/>
<rect x="480.20" y="496" width="1.2" height="7.5" fill="#525252"/>
<rect x="483.60" y="496" width="1.2" height="7.5" fill="#404040"/>
<rect x="486.98" y="496" width="1.2" height="7.5" fill="#525252"/>
<rect x="490.38" y="496" width="1.2" height="7.5" fill="#404040"/>
<rect x="493.77" y="496" width="1.2" height="7.5" fill="#525252"/>
<rect x="497.17" y="496" width="1.2" height="7.5" fill="#404040"/>
<rect x="500.56" y="496" width="1.2" height="7.5" fill="#525252"/>
<rect x="503.96" y="496" width="1.2" height="7.5" fill="#404040"/>
<rect x="507.35" y="496" width="1.2" height="7.5" fill="#525252"/>
<rect x="510.75" y="496" width="1.2" height="7.5" fill="#404040"/>
<rect x="514.14" y="496" width="1.2" height="7.5" fill="#525252"/>
<rect x="517.54" y="496" width="1.2" height="7.5" fill="#404040"/>
<rect x="520.92" y="496" width="1.2" height="7.5" fill="#525252"/>
<rect x="524.32" y="496" width="1.2" height="7.5" fill="#404040"/>
<rect x="527.71" y="496" width="1.2" height="7.5" fill="#525252"/>
<rect x="531.11" y="496" width="1.2" height="7.5" fill="#404040"/>
<rect x="534.50" y="496" width="1.2" height="7.5" fill="#525252"/>
<rect x="537.90" y="496" width="1.2" height="7.5" fill="#404040"/>
<rect x="541.29" y="496" width="1.2" height="7.5" fill="#525252"/>
<rect x="544.69" y="496" width="1.2" height="7.5" fill="#404040"/>
<rect x="548.08" y="496" width="1.2" height="7.5" fill="#525252"/>
<rect x="551.48" y="496" width="1.2" height="7.5" fill="#404040"/>
<rect x="554.86" y="496" width="1.2" height="7.5" fill="#525252"/>
<rect x="558.26" y="496" width="1.2" height="7.5" fill="#404040"/>
<rect x="561.65" y="496" width="1.2" height="7.5" fill="#525252"/>
<rect x="565.05" y="496" width="1.2" height="7.5" fill="#404040"/>
<rect x="568.44" y="496" width="1.2" height="7.5" fill="#525252"/>
<rect x="571.84" y="496" width="1.2" height="7.5" fill="#404040"/>
<g font-family="Liberation Sans" font-size="5.8" fill="#8c8c8c">
<text x="26.00" y="508.3" text-anchor="middle">20</text>
<text x="59.94" y="508.3" text-anchor="middle">25</text>
<text x="93.88" y="508.3" text-anchor="middle">30</text>
<text x="127.82" y="508.3" text-anchor="middle">35</text>
<text x="161.76" y="508.3" text-anchor="middle">40</text>
<text x="195.70" y="508.3" text-anchor="middle">45</text>
<text x="229.64" y="508.3" text-anchor="middle">50</text>
<text x="263.58" y="508.3" text-anchor="middle">55</text>
<text x="297.52" y="508.3" text-anchor="middle">60</text>
<text x="331.46" y="508.3" text-anchor="middle">65</text>
<text x="365.40" y="508.3" text-anchor="middle">70</text>
<text x="399.34" y="508.3" text-anchor="middle">75</text>
<text x="433.28" y="508.3" text-anchor="middle">80</text>
<text x="467.22" y="508.3" text-anchor="middle">85</text>
<text x="501.16" y="508.3" text-anchor="middle">90</text>
<text x="535.10" y="508.3" text-anchor="middle">95</text>
<text x="569.04" y="508.3" text-anchor="middle">100</text>
</g>
<!-- status row -->
<g font-family="Liberation Sans">
<rect x="0" y="511" width="597" height="12" fill="#474747"/>
<rect x="0" y="511" width="574" height="0.8" fill="#2a2a2a"/>
<path d="M266 513.5q2.5-2 5 0l-2.5 6z" fill="#e8a0b8"/>
<circle cx="268.5" cy="514.5" r="1.2" fill="#fff"/>
<rect x="279.5" y="515" width="5.5" height="4.5" fill="#e0e0e0"/>
<path d="M280.8 515v-1.5a1.5 1.5 0 0 1 3 0v1.5" stroke="#e0e0e0" stroke-width="0.9" fill="none"/>
<rect x="291.6" y="512.2" width="7" height="6.5" fill="#e8e8e8"/>
<path d="M293 513.5h2v2h-2zM295.5 516h2v2h-2z" fill="#555"/>
<text x="302.5" y="518.5" font-size="6.5" fill="#bdbdbd">X:</text>
<rect x="307.7" y="510.8" width="27.8" height="9" fill="#222"/>
<rect x="308.5" y="511.6" width="26.5" height="7.8" fill="#5a5a5a"/>
<text x="310" y="518.3" font-size="6.5" fill="#e8e8e8">0.0</text>
<path d="M337.5 514.5l1.5-2 1.5 2zM337.5 516.5l1.5 2 1.5-2z" fill="#d8d8d8"/>
<text x="342" y="518.5" font-size="6.5" fill="#bdbdbd">Y:</text>
<rect x="348.4" y="510.8" width="27.7" height="9" fill="#222"/>
<rect x="349.2" y="511.6" width="26.5" height="7.8" fill="#5a5a5a"/>
<text x="350.5" y="518.3" font-size="6.5" fill="#e8e8e8">-0.0</text>
<path d="M377.8 514.5l1.5-2 1.5 2zM377.8 516.5l1.5 2 1.5-2z" fill="#d8d8d8"/>
<text x="382.3" y="518.5" font-size="6.5" fill="#bdbdbd">Z:</text>
<rect x="388.4" y="510.8" width="27.1" height="9" fill="#222"/>
<rect x="389.2" y="511.6" width="25.9" height="7.8" fill="#5a5a5a"/>
<text x="390.5" y="518.3" font-size="6.5" fill="#e8e8e8">90.0</text>
<path d="M417.5 514.5l1.5-2 1.5 2zM417.5 516.5l1.5 2 1.5-2z" fill="#d8d8d8"/>
<rect x="421.5" y="511" width="68" height="9" fill="#383838"/>
<rect x="421.5" y="511" width="68" height="0.8" fill="#2a2a2a"/>
<text x="424" y="518" font-size="6" fill="#b0b0b0" textLength="38" lengthAdjust="spacingAndGlyphs">Grid = 254.0mm</text>
<rect x="489.6" y="510" width="0.9" height="13" fill="#2e2e2e"/>
<rect x="491.5" y="510" width="0.9" height="13" fill="#5c5c5c"/>
<path d="M476 521h11" stroke="#9a9a9a" stroke-width="1.4"/>
<rect x="480" y="519.5" width="4" height="3.5" fill="#1e1e1e"/>
<rect x="494.5" y="511" width="23" height="9" fill="#484848" stroke="#2c2c2c" stroke-width="0.8"/>
<text x="497" y="518" font-size="5.8" fill="#b0b0b0" textLength="19" lengthAdjust="spacingAndGlyphs">Auto Key</text>
<rect x="520" y="511.2" width="55.5" height="8.4" fill="#1c1c1c"/>
<rect x="520.8" y="512" width="46" height="7" fill="#5c5c5c"/>
<text x="521.5" y="518" font-size="6" fill="#d8d8d8" textLength="20" lengthAdjust="spacingAndGlyphs">Selected</text>
<rect x="567" y="511.5" width="7.5" height="7.8" fill="#f0f0f0"/>
<path d="M568.7 514h4l-2 3z" fill="#111"/>
<path d="M579.5 513v6M581 516l3-3v6zM584.5 516l3-3v6z" stroke="#d8d8d8" stroke-width="0.9" fill="#d8d8d8"/>
<path d="M593 516l3-3v6zM597 513v6M599 513v6" stroke="#d8d8d8" stroke-width="0.9" fill="#d8d8d8"/>
<path d="M605 513l4 3-4 3z" stroke="#d8d8d8" stroke-width="0.9" fill="none"/>
<path d="M614 513v6M616 513v6M618 513l2.5 3-2.5 3z" stroke="#d8d8d8" stroke-width="0.9" fill="#d8d8d8"/>
</g>
<!-- right panel -->
<rect x="594.5" y="15" width="2.8" height="481.5" fill="#55554a"/><rect x="595.4" y="15" width="1" height="481.5" fill="#74745c"/>
<rect x="597.3" y="15" width="22.7" height="496" fill="#474747"/>
<rect x="598.2" y="15" width="0.8" height="489" fill="#383838"/>
<!-- panel tab icons -->
<circle cx="603.7" cy="21" r="4" fill="#8a7f50" opacity="0.6"/>
<circle cx="603.7" cy="21" r="2.6" fill="#efe4a8"/>
<rect x="608.9" y="16.3" width="11.1" height="10.3" fill="#27303c"/>
<path d="M611.5 26Q612.5 19 620 17.5" stroke="#a8c8e8" stroke-width="1.6" fill="none"/>
<rect x="610" y="16.5" width="1" height="9" fill="#8898a8"/>
<!-- name field -->
<rect x="600.3" y="30" width="19.7" height="11.5" fill="#111"/>
<rect x="601.3" y="31" width="18.7" height="9.5" fill="#3e3e3e"/>
<text x="602.5" y="38.5" font-size="8" fill="#f0f0f0" font-family="Liberation Sans" textLength="20" lengthAdjust="spacingAndGlyphs">Tube00</text>
<!-- modifier list -->
<rect x="600.3" y="42.6" width="19.7" height="10.9" fill="#222"/>
<rect x="601.3" y="43.6" width="18.7" height="9.6" fill="#505050"/>
<text x="602.5" y="50.8" font-size="7.5" fill="#d0d0d0" font-family="Liberation Sans" textLength="26" lengthAdjust="spacingAndGlyphs">Modifier</text>
<!-- stack -->
<rect x="599.5" y="55" width="20.5" height="69.5" fill="#4a4a4a"/>
<path d="M600.5 57.5l2 2.3-2 2.3" stroke="#9a9a9a" stroke-width="0.8" fill="none"/>
<circle cx="607.8" cy="59.8" r="2.4" fill="#f0f0f0"/>
<rect x="613.5" y="57.8" width="4" height="4.5" fill="#151515"/>
<rect x="615" y="58.8" width="1" height="2.5" fill="#888"/>
<rect x="600.5" y="65.5" width="1.5" height="4.5" fill="#777"/>
<rect x="604.3" y="65.5" width="4.6" height="4.6" fill="#111"/>
<rect x="606" y="66.5" width="1" height="2.5" fill="#999"/>
<rect x="612.3" y="66" width="7.7" height="3.5" fill="#a8a8a8"/>
<rect x="599.5" y="123.8" width="20.5" height="1.3" fill="#e0e0e0"/>
<!-- buttons -->
<rect x="599.5" y="126.5" width="20.5" height="9.5" fill="#414141"/>
<path d="M602 131h13" stroke="#cfcfcf" stroke-width="1.4"/>
<path d="M608 128.5v5" stroke="#cfcfcf" stroke-width="1.2"/>
<rect x="617" y="127" width="1" height="8.5" fill="#2e2e2e"/>
<rect x="599.5" y="143" width="20.5" height="1.6" fill="#2c2c2c"/>
<!-- rollout -->
<rect x="599.5" y="148.5" width="20.5" height="74.5" fill="#3e3e3e"/>
<rect x="599.5" y="148.5" width="20.5" height="3" fill="#4e4e4e"/>
<rect x="602.5" y="157" width="17.5" height="51" fill="none" stroke="#575757" stroke-width="0.8"/>
<path d="M603.5 153.5h2" stroke="#888" stroke-width="0.8"/>
<text x="607.5" y="163.5" font-size="6" fill="#c8c8c8" font-family="Liberation Sans">Manip</text>
<circle cx="615.8" cy="171.8" r="2.3" fill="none" stroke="#999" stroke-width="0.8"/>
<text x="617" y="184.5" font-size="7" fill="#e0e0e0" font-family="Liberation Sans">T</text>
<rect x="607.8" y="193" width="4.8" height="4.8" fill="#1a1a1a"/>
<path d="M608.6 195.4l1.4 1.4 2-2.6" stroke="#eee" stroke-width="0.9" fill="none"/>
<rect x="614" y="193.5" width="6" height="3.5" fill="#7a7a7a"/>
<rect x="607.8" y="203" width="4.8" height="4.8" fill="#1a1a1a"/>
<path d="M608.6 205.4l1.4 1.4 2-2.6" stroke="#eee" stroke-width="0.9" fill="none"/>
<rect x="614" y="203.5" width="6" height="3.5" fill="#7a7a7a"/>
<text x="612" y="217" font-size="6.5" fill="#a8a8a8" font-family="Liberation Sans">Sh</text>
<rect x="599.5" y="222.5" width="20.5" height="1.3" fill="#2e2e2e"/>
<rect x="598" y="504" width="22" height="1" fill="#3a3a3a"/>
</svg>
</body></html>
